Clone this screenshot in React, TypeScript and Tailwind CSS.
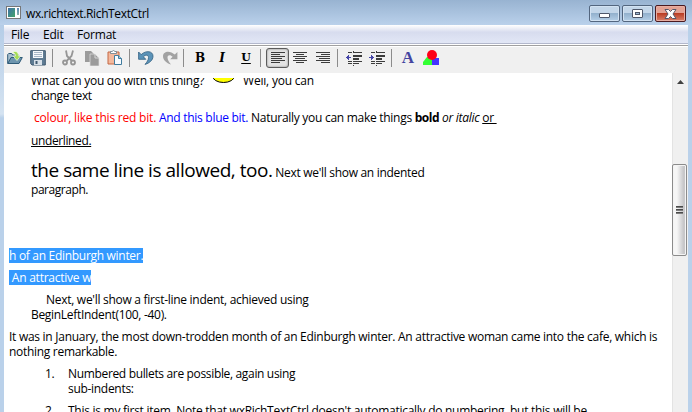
import React from "react";

function Line({ className = "", children }: { className?: string; children: React.ReactNode }) {
  return <div className={`whitespace-pre h-[15px] leading-[15px] ${className}`}>{children}</div>;
}

function Sep({ className = "" }: { className?: string }) {
  return <div className={`h-[18px] w-px shrink-0 bg-[#8c8c8c] ${className}`} />;
}

function AlignIcon({ rows }: { rows: number[][] }) {
  return (
    <svg width="14" height="12" viewBox="0 0 14 12" shapeRendering="crispEdges">
      {rows.map(([x, w], i) => (
        <rect key={i} x={x} y={i * 2} width={w} height="1" fill="#3c3c3c" />
      ))}
    </svg>
  );
}

function IndentIcon({ right = false }: { right?: boolean }) {
  return (
    <svg width="16" height="15" viewBox="0 0 16 15" shapeRendering="crispEdges">
      <g fill="#3c3c3c">
        <rect x="7" y="0" width="1" height="1" />
        <rect x="2" y="1" width="4" height="1" />
        <rect x="7" y="1" width="9" height="1" />
        <rect x="7" y="4" width="9" height="2" />
        <rect x="7" y="7" width="6" height="2" />
        <rect x="2" y="10" width="4" height="1" />
        <rect x="7" y="10" width="9" height="1" />
        <rect x="2" y="12" width="4" height="1" />
        <rect x="7" y="12" width="6" height="1" />
        <rect x="7" y="14" width="1" height="1" />
      </g>
      <path fill="#4444a8" d={right ? "M0 6h2V4h1v1h1v1h1v1H4v1H3v1H2V7H0z" : "M5 6H3V4H2v1H1v1H0v1h1v1h1v1h1V7h2z"} />
    </svg>
  );
}

function Toolbar() {
  return (
    <div className="flex h-[26px] shrink-0 items-center bg-[#f0f0f0] pb-[4px] pl-[3px]">
      <svg width="16" height="16" viewBox="0 0 16 16">
        <path d="M.7 13.500V4.500l1-1h3l1 1.500h6v3" fill="#a9c0cf" stroke="#2f5b78" />
        <path d="M.8 13.500 4 7.500h11.300l-3.300 6z" fill="#6d95ae" stroke="#2f5b78" />
        <path d="M5.500 2c3.500-1.500 6 0 6 4h2L10 10.500 6.200 6h2.200c0-1.700-1-3-2.900-4z" fill="#a5dc55" stroke="#f4fbe8" strokeWidth=".7" />
      </svg>
      <svg className="ml-[7px]" width="16" height="16" viewBox="0 0 16 16">
        <path d="M.7.700V13.500L2 15h13.300V.7z" fill="#5f7c94" stroke="#405a70" />
        <path d="M3 1h10v7H3z" fill="#f5f8fb" />
        <path d="M4 2.500h8M4 4.500h8M4 6.500h8" stroke="#a6b6c6" />
        <path d="M4 10h8v5H4z" fill="#d8e0e8" />
        <path d="M5.500 11h2v3h-2z" fill="#405a70" />
      </svg>
      <Sep className="ml-[6px]" />
      <svg className="ml-[9px]" width="14" height="16" viewBox="0 0 14 16" fill="none" stroke="#969696" strokeWidth="1.800">
        <path d="M4 .5 5 6l5 5M11 .5 9.500 6 4.500 11" />
        <circle cx="3" cy="12.500" r="2" />
        <circle cx="11" cy="12.500" r="2" />
      </svg>
      <svg className="ml-[9px]" width="16" height="16" viewBox="0 0 16 16">
        <path d="M0 1h6l3 3v8H0z" fill="#9b9b9b" />
        <path d="M5 4h5l4 4v8H5z" fill="#9b9b9b" stroke="#e1e1e1" strokeWidth=".7" />
        <path d="M10 4v4h4" fill="none" stroke="#d5d5d5" />
      </svg>
      <svg className="ml-[6px]" width="16" height="16" viewBox="0 0 16 16">
        <path d="M1 2h11v12H1z" fill="#f4b99d" stroke="#c36844" />
        <path d="M3.500 3.500v-2H5L6.500.5 8 1.500h1.500v2z" fill="#fff" stroke="#667b8b" strokeWidth=".8" />
        <path d="M7.500 5.500h4l3 3v6h-7z" fill="#f8fbff" stroke="#407c9e" />
        <path d="M11.500 5.500v3h3" fill="#9ecce0" stroke="#407c9e" />
      </svg>
      <Sep className="ml-[6px]" />
      <svg className="ml-[8px]" width="16" height="16" viewBox="0 0 16 16">
        <path d="M.6 2v7.300h7.200L5.400 6.800C7.500 4.300 10.500 4.800 10.500 7.500c0 2.500-1.500 4.500-3.500 6.900 4.500-1.300 8-4.200 8-8.200C15 1 8 0 3.200 4.600z" fill="#5b93b8" stroke="#315f80" strokeWidth=".8" />
      </svg>
      <svg className="ml-[8px]" width="16" height="16" viewBox="0 0 16 16">
        <path d="M15.400 2v7.300H8.200l2.400-2.500C8.500 4.300 5.500 4.800 5.500 7.500c0 2.500 1.500 4.500 3.500 6.900C4.500 13.100 1 10.200 1 6.200 1 1 8 0 12.800 4.600z" fill="#a2a2a2" />
      </svg>
      <Sep className="ml-[5px]" />
      <div className="ml-[8px] w-[16px] text-center font-['DejaVu_Serif',serif] text-[12px] leading-[18px] font-bold text-black">B</div>
      <div className="ml-[6px] w-[16px] text-center font-['DejaVu_Serif',serif] text-[12px] leading-[18px] font-bold text-black italic">I</div>
      <div className="ml-[8px] w-[16px] text-center font-['DejaVu_Serif',serif] text-[11px] leading-[16px] font-bold text-black underline underline-offset-2">U</div>
      <Sep className="ml-[6px]" />
      <div className="ml-[5px] flex h-[20px] w-[23px] items-center justify-center rounded-[3px] border border-[#5c5c5c] bg-[#e3e3e3] shadow-[inset_0_0_2px_#777]">
        <AlignIcon rows={[[0, 14], [0, 9], [0, 14], [0, 11], [0, 14], [0, 9]]} />
      </div>
      <div className="ml-[4px] flex"><AlignIcon rows={[[0, 14], [3, 8], [0, 14], [2, 10], [0, 14], [3, 8]]} /></div>
      <div className="ml-[9px] flex"><AlignIcon rows={[[0, 14], [5, 9], [0, 14], [3, 11], [0, 14], [5, 9]]} /></div>
      <Sep className="ml-[7px]" />
      <div className="ml-[8px] flex"><IndentIcon /></div>
      <div className="ml-[7px] flex"><IndentIcon right /></div>
      <Sep className="ml-[6px]" />
      <div className="ml-[8px] w-[16px] text-center font-['Liberation_Serif',serif] text-[17px] leading-[18px] font-bold text-[#4444a0]">A</div>
      <svg className="ml-[7px]" width="17" height="16" viewBox="0 0 17 16">
        <path d="M4 7h5l1 3v5H0v-3z" fill="#33ff33" />
        <path d="M9 8h7v7H9z" fill="#4433ff" />
        <circle cx="9" cy="5" r="5" fill="#ff0018" />
      </svg>
    </div>
  );
}

function TitleBar() {
  return (
    <div className="flex h-[25px] shrink-0 bg-linear-to-b from-[#98b3d1] to-[#bad1eb] pl-[6px]">
      <div className="mt-[6px] h-[13px] w-[15px] border border-[#777] bg-white p-px">
        <div className="flex h-full justify-between">
          <div className="w-[7px] bg-linear-to-br from-[#3f6ea6] to-[#45a364]" />
          <div className="h-[7px] w-[2px] bg-linear-to-b from-[#5887b7] to-[#8ab0a8]" />
        </div>
      </div>
      <div className="ml-[5px] h-[25px] text-[12px] leading-[28px] tracking-[-0.37px] whitespace-pre">wx.richtext.RichTextCtrl</div>
      <div className="mt-[5px] mr-[6px] ml-auto flex gap-[2px]">
        <div className="flex h-[17px] w-[31px] items-end justify-center rounded-[2px] border border-[#53667f] bg-linear-to-b from-[#c3d6e9] from-50% via-[#93b1cd] via-50% to-[#b5cfe7] pb-[3px] shadow-[inset_0_0_0_1px_#d2e2f2]">
          <div className="h-[5px] w-[11px] rounded-[1px] border border-[#4e576a] bg-white" />
        </div>
        <div className="flex h-[17px] w-[31px] items-center justify-center rounded-[2px] border border-[#53667f] bg-linear-to-b from-[#c3d6e9] from-50% via-[#93b1cd] via-50% to-[#b5cfe7] shadow-[inset_0_0_0_1px_#d2e2f2]">
          <div className="flex h-[9px] w-[11px] items-center justify-center rounded-[1px] border border-[#4e576a] bg-white">
            <div className="h-[3px] w-[5px] border border-[#4e576a] bg-[#9cb8d4]" />
          </div>
        </div>
        <div className="flex h-[17px] w-[31px] items-center justify-center rounded-[2px] border border-[#4a1a20] bg-linear-to-b from-[#e3a294] from-50% via-[#ba3d24] via-50% to-[#d9806a] shadow-[inset_0_0_0_1px_#e7aea2]">
          <svg width="13" height="10" viewBox="0 0 13 10">
            <path d="M1 .5h3.500l2 2 2-2H12L9 5l3 4.500H8.500l-2-2-2 2H1L4 5z" fill="#fff" stroke="#54576a" />
          </svg>
        </div>
      </div>
    </div>
  );
}

export default function App() {
  return (
    <div className="flex h-[412px] w-[692px] flex-col overflow-hidden bg-[#bad1ea] font-['Open_Sans','Noto_Sans',sans-serif] text-[12px] text-black">
      <TitleBar />
      <div className="flex min-h-0 flex-1">
        <div className="w-[4px] shrink-0 bg-linear-to-b from-[#b5cde7] via-[#d5e3f1] via-23% to-[#bad1ea] to-24%" />
        <div className="flex w-[684px] shrink-0 flex-col bg-white">
          <div className="flex h-[19px] shrink-0 border-b border-[#b3b8cc] bg-linear-to-b from-white via-[#d7dcee] via-40% to-[#e2e7f6] leading-[20px] tracking-[-0.2px]">
            <span className="ml-[7px] w-[32px]">File</span>
            <span className="w-[34px]">Edit</span>
            <span>Format</span>
          </div>
          <div className="h-[3px] shrink-0 border-y border-white bg-[#a0a0a0]" />
          <Toolbar />
          <div className="flex min-h-0 flex-1">
            <div className="min-w-0 flex-1 overflow-hidden">
              <div className="mt-[5px] h-[25px] overflow-hidden pl-[27px]">
                <Line className="-mt-[5px] flex tracking-[-0.25px]">
                  <span className="w-[182px]">What can you do with this thing?</span>
                  <svg className="mr-[9px]" width="21" height="10" viewBox="0 0 21 10"><ellipse cx="10.500" cy="3" rx="11" ry="6.500" fill="#ff0" stroke="#000" /></svg>
                  <span className="tracking-[-0.2px]">Well, you can</span>
                </Line>
                <Line className="tracking-[-0.4px]">change text</Line>
              </div>
              <Line className="mt-[7px] pl-[30px] tracking-[-0.28px]"><span className="tracking-[-0.2px] text-[#f00]">colour, like this red bit.</span><span className="text-[#00f]"> And this blue bit.</span> Naturally you can make things <b className="tracking-[-0.45px]">bold</b> <i>or italic</i> <u>or </u></Line>
              <Line className="mt-[8px] pl-[27px] tracking-[-0.38px]"><u>underlined.</u></Line>
              <div className="mt-[10px] flex h-[24px] items-baseline pl-[27px] leading-[24px] whitespace-pre"><span className="text-[19px] tracking-[-0.47px]">the same line is allowed, too.</span><span className="tracking-[-0.3px]"> Next we'll show an indented</span></div>
              <Line className="pl-[27px] tracking-[-0.45px]">paragraph.</Line>
              <div className="mt-[51px] pl-[5px]"><Line className="w-[134px] bg-[#3399ff] tracking-[-0.3px] text-white">h of an Edinburgh winter.</Line></div>
              <div className="mt-[7px] pl-[5px]"><Line className="w-[82px] bg-[#3399ff] tracking-[-0.25px] text-white"> An attractive w</Line></div>
              <Line className="mt-[7px] pl-[42px] tracking-[-0.28px]">Next, we'll show a first-line indent, achieved using</Line>
              <Line className="pl-[27px] tracking-[-0.31px]">BeginLeftIndent(100, -40).</Line>
              <Line className="mt-[7px] pl-[5px] tracking-[-0.276px]">It was in January, the most down-trodden month of an Edinburgh winter. An attractive woman came into the cafe, which is</Line>
              <Line className="pl-[5px] tracking-[-0.3px]">nothing remarkable.</Line>
              <Line className="mt-[7px] flex pl-[41px] tracking-[-0.34px]"><span className="w-[23px]">1.</span><span>Numbered bullets are possible, again using</span></Line>
              <Line className="pl-[64px] tracking-[-0.3px]">sub-indents:</Line>
              <Line className="mt-[7px] flex pl-[41px] tracking-[-0.27px]"><span className="w-[23px]">2.</span><span>This is my first item. Note that wxRichTextCtrl doesn't automatically do numbering, but this will be</span></Line>
            </div>
            <div className="flex w-[16px] shrink-0 flex-col bg-[#f0f0f0] shadow-[inset_1px_0_#e3e3e3]">
              <svg className="mt-[7px] ml-[5px] shrink-0" width="7" height="4" viewBox="0 0 7 4"><path d="M3.500 0 7 4H0z" fill="#404040" /></svg>
              <div className="mt-[80px] flex h-[92px] w-[15px] shrink-0 flex-col items-center justify-center gap-px rounded-[2px] border border-[#8b8b8b] bg-linear-to-r from-[#f6f6f6] from-30% to-[#c8c8ca] to-80% shadow-[inset_0_0_0_1px_#f4f4f4]">
                <div className="h-[2px] w-[7px] bg-linear-to-b from-[#333] to-[#999]" />
                <div className="h-[2px] w-[7px] bg-linear-to-b from-[#333] to-[#999]" />
                <div className="h-[2px] w-[7px] bg-linear-to-b from-[#333] to-[#999]" />
              </div>
            </div>
          </div>
        </div>
      </div>
    </div>
  );
}
